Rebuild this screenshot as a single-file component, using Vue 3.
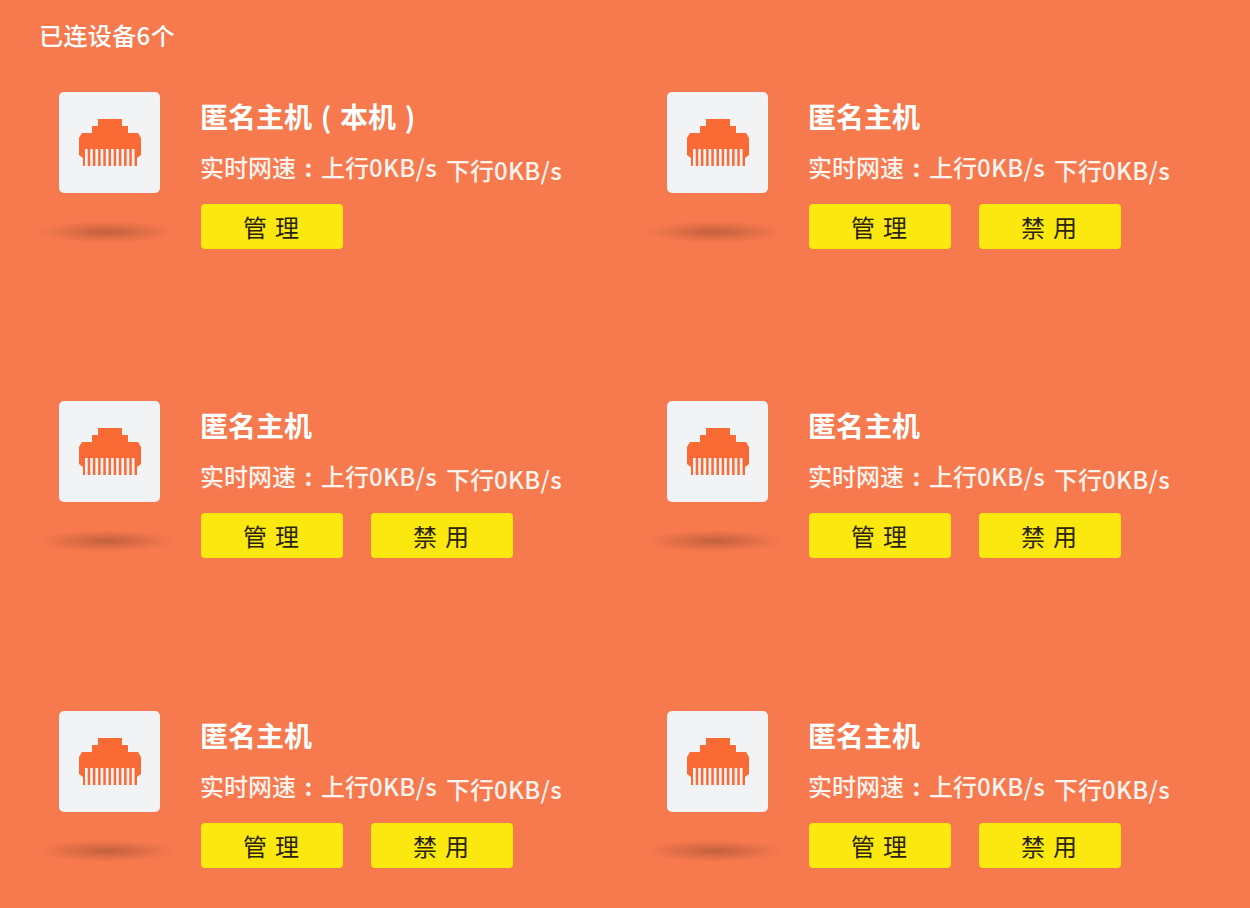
<script setup>
const hosts = [
  { name: '匿名主机(本机)', local: true },
  { name: '匿名主机' },
  { name: '匿名主机' },
  { name: '匿名主机' },
  { name: '匿名主机' },
  { name: '匿名主机' },
]
const pins = [0, 1, 2, 3, 4, 5, 6, 7, 8, 9]
</script>

<template>
  <main class="page">
    <h1 class="count">已连设备6个</h1>
    <section class="grid">
      <article v-for="(host, i) in hosts" :key="i" class="host">
        <div class="visual">
          <div class="tile">
            <svg class="port" viewBox="0 0 62 50" aria-hidden="true">
              <path class="plug" d="M19 1h24v7h6v7h10l3 5v17l-4 3v8H4v-8l-4-3V20l3-5h10V8h6z" />
              <rect v-for="p in pins" :key="p" class="pin" :x="6 + p * 5.2" y="31" width="2.7" height="19" />
            </svg>
          </div>
          <div class="shadow"></div>
        </div>
        <div class="info">
          <h2 class="name">
            <template v-if="host.local">匿名主机<span class="paren">(</span>本机<span class="paren">)</span></template>
            <template v-else>{{ host.name }}</template>
          </h2>
          <div class="speed">
            <span>实时网速<span class="colon">:</span>上行<span class="rate">0KB/s</span></span>
            <span class="down">下行<span class="rate">0KB/s</span></span>
          </div>
          <div class="actions">
            <button class="btn" type="button">管理</button>
            <button v-if="!host.local" class="btn" type="button">禁用</button>
          </div>
        </div>
      </article>
    </section>
  </main>
</template>

<style scoped>
.page {
  width: 1250px;
  height: 908px;
  overflow: hidden;
  box-sizing: border-box;
  background: #f7794e;
  color: #fff;
  font-family: "Noto Sans CJK SC", "Noto Sans", sans-serif;
}
.count {
  margin: 0;
  padding: 17px 0 0 39px;
  height: 91.6px;
  box-sizing: border-box;
  font-size: 24px;
  line-height: 36px;
  font-weight: 500;
  letter-spacing: 0.4px;
}
.grid {
  display: grid;
  grid-template-columns: 608px 608px;
  grid-auto-rows: 309.5px;
  padding-left: 59px;
}
.host {
  display: flex;
  gap: 41px;
  align-items: flex-start;
}
.visual {
  width: 101px;
  flex: none;
}
.tile {
  width: 101px;
  height: 101px;
  border-radius: 5px;
  background: #f2f3f5;
  display: flex;
  align-items: center;
  justify-content: center;
}
.port {
  width: 62px;
  height: 50px;
  display: block;
  margin-top: 1px;
}
.plug {
  fill: #f96a34;
}
.pin {
  fill: #f2f3f5;
}
.shadow {
  width: 136px;
  height: 22px;
  margin: 28px 0 0 -20px;
  background: radial-gradient(ellipse closest-side, rgba(120, 62, 40, 0.42), rgba(120, 62, 40, 0.2) 50%, rgba(120, 62, 40, 0));
}
.info {
  display: flex;
  flex-direction: column;
  align-items: flex-start;
}
.name {
  height: 51px;
  margin: -1px 0 0 -1px;
  font-size: 28px;
  line-height: 50px;
  font-weight: 700;
  white-space: nowrap;
}
.paren {
  display: inline-block;
  width: 28px;
  text-align: center;
  font-weight: 700;
}
.speed {
  display: flex;
  height: 62px;
  margin-left: -1px;
  font-size: 24px;
  line-height: 50px;
  white-space: nowrap;
  color: #fff3ee;
  font-weight: 500;
}
.rate {
  letter-spacing: 0.3px;
}
.colon {
  display: inline-block;
  width: 25px;
  text-align: center;
  font-weight: 700;
}
.down {
  margin: 3px 0 0 9px;
}
.actions {
  display: flex;
  gap: 28px;
}
.btn {
  width: 142px;
  height: 45px;
  padding: 0 0 0 6px;
  border: 0;
  border-radius: 4px;
  background: #fbe80f;
  color: #2a2410;
  font-family: inherit;
  font-size: 24px;
  line-height: 45px;
  letter-spacing: 8px;
  font-weight: 400;
}
</style>
